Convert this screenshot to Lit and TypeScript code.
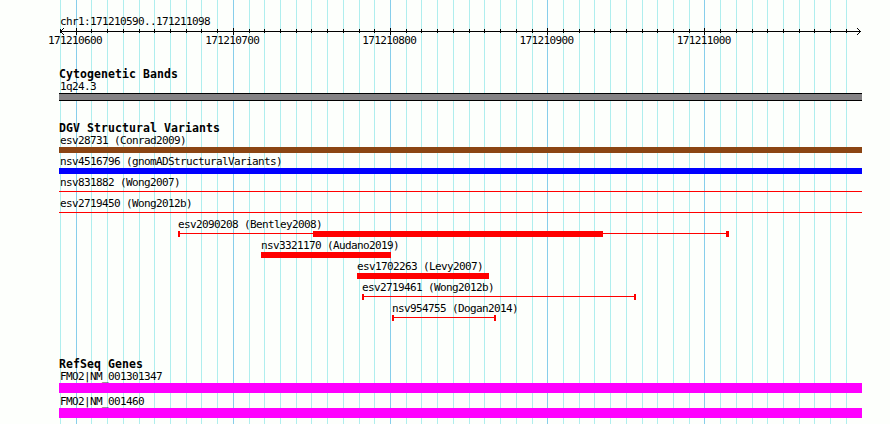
import { LitElement, html, css, svg } from "lit";
import { customElement, property } from "lit/decorators.js";
import { styleMap } from "lit/directives/style-map.js";

// Offsets inside the plot, which starts at the left page margin.
const ORIGIN = 1.5;
const STEP = 15.717;
const ticks = Array.from({ length: 51 }, (_, k) => ({
  x: Math.floor(ORIGIN + k * STEP),
  major: k % 10 === 1,
}));

interface Variant {
  name: string;
  color: string;
  x: number;
  width: number;
  kind: "box" | "line" | "span";
  box?: [number, number];
  endCap?: number;
}

const variants: Variant[] = [
  { name: "esv28731 (Conrad2009)", color: "#8b4513", x: 0, width: 803, kind: "box" },
  { name: "nsv4516796 (gnomADStructuralVariants)", color: "#0000ff", x: 0, width: 803, kind: "box" },
  { name: "nsv831882 (Wong2007)", color: "#ff0000", x: 0, width: 803, kind: "line" },
  { name: "esv2719450 (Wong2012b)", color: "#ff0000", x: 0, width: 803, kind: "line" },
  { name: "esv2090208 (Bentley2008)", color: "#ff0000", x: 119, width: 551, kind: "span", box: [135, 290], endCap: 3 },
  { name: "nsv3321170 (Audano2019)", color: "#ff0000", x: 202, width: 130, kind: "box" },
  { name: "esv1702263 (Levy2007)", color: "#ff0000", x: 298, width: 132, kind: "box" },
  { name: "esv2719461 (Wong2012b)", color: "#ff0000", x: 303, width: 274, kind: "span" },
  { name: "nsv954755 (Dogan2014)", color: "#ff0000", x: 333, width: 104, kind: "span" },
];

const textStyles = css`
  .label, .title { display: block; white-space: pre; color: #000; }
  .label {
    font: 11px/12px "DejaVu Sans Mono", "Liberation Mono", monospace;
    letter-spacing: -0.6225px;
    height: 12px;
    padding: 1px 0 0 1px;
  }
  .title {
    font: bold 11.5px/13px "DejaVu Sans Mono", "Liberation Mono", monospace;
    letter-spacing: 0.0767px;
    height: 12px;
  }
`;

@customElement("grid-lines")
export class GridLines extends LitElement {
  static styles = css`
    :host { display: block; }
    svg { display: block; width: 803px; height: 424px; }
    .minor { fill: #afeeee; }
    .major { fill: #87ceeb; }
  `;
  render() {
    return html`<svg viewBox="0 0 803 424" shape-rendering="crispEdges">
      ${ticks.map((t) => svg`<rect class=${t.major ? "major" : "minor"} x=${t.x} y="0" width="1" height="424"></rect>`)}
    </svg>`;
  }
}

@customElement("ruler-track")
export class RulerTrack extends LitElement {
  static styles = [textStyles, css`
    :host { display: block; height: 53px; padding-top: 15px; }
    .axis { display: block; width: 803px; height: 7px; overflow: visible; }
    .numbers {
      display: grid;
      grid-template-columns: repeat(5, 157.17px);
      margin: -1px 0 0 -11px;
    }
    .numbers .label { padding-left: 0; }
  `];
  render() {
    return html`
      <span class="label">chr1:171210590..171211098</span>
      <svg class="axis" viewBox="0 0 803 7" shape-rendering="crispEdges">
        <rect x="1" y="3" width="801" height="1"></rect>
        ${ticks.map((t) => svg`<rect x=${t.x} y=${t.major ? 0 : 1} width="1" height=${t.major ? 7 : 4}></rect>`)}
        <path d="M2 2h1v1h-1zM3 1h1v1h-1zM4 0h1v1h-1zM2 4h1v1h-1zM3 5h1v1h-1zM4 6h1v1h-1z"></path>
        <path d="M800 2h1v1h-1zM799 1h1v1h-1zM798 0h1v1h-1zM800 4h1v1h-1zM799 5h1v1h-1zM798 6h1v1h-1z"></path>
      </svg>
      <div class="numbers">
        ${[600, 700, 800, 900, 1000].map((n) => html`<span class="label">${171210000 + n}</span>`)}
      </div>`;
  }
}

@customElement("variant-row")
export class VariantRow extends LitElement {
  static styles = [textStyles, css`
    :host { display: block; height: 21px; }
    .glyph { display: block; height: 6px; }
  `];
  @property({ attribute: false }) variant!: Variant;
  render() {
    const { name, color, x, width, kind, box, endCap = 2 } = this.variant;
    return html`<div style=${styleMap({ marginLeft: `${x}px`, width: `${width}px` })}>
      <span class="label" style=${styleMap({ paddingLeft: x > 0 ? "0px" : "1px" })}>${name}</span>
      <svg class="glyph" width=${width} height="6" fill=${color} shape-rendering="crispEdges">
        ${kind === "box"
          ? svg`<rect width=${width} height="6"></rect>`
          : svg`<rect y="2" width=${width} height="1"></rect>`}
        ${kind === "span"
          ? svg`<rect width="2" height="6"></rect><rect x=${width - endCap} width=${endCap} height="6"></rect>`
          : ""}
        ${box ? svg`<rect x=${box[0]} width=${box[1]} height="6"></rect>` : ""}
      </svg>
    </div>`;
  }
}

@customElement("app-root")
export class AppRoot extends LitElement {
  static styles = [textStyles, css`
    :host { display: block; background: #fdfffc; height: 424px; overflow: hidden; }
    .plot { position: relative; width: 803px; height: 424px; margin-left: 59px; }
    .grid { position: absolute; inset: 0; }
    .tracks { position: relative; display: flex; flex-direction: column; }
    .bands { height: 54px; }
    .band { height: 6px; border: solid #000; border-width: 1px 0; background: #848284; }
    .variants { height: 236px; }
    .gene { height: 25px; }
    .gene-bar { height: 10px; background: #ff00ff; }
  `];
  render() {
    return html`<div class="plot">
      <grid-lines class="grid"></grid-lines>
      <div class="tracks">
        <ruler-track></ruler-track>
        <section class="bands">
          <span class="title">Cytogenetic Bands</span>
          <span class="label">1q24.3</span>
          <div class="band"></div>
        </section>
        <section class="variants">
          <span class="title">DGV Structural Variants</span>
          ${variants.map((v) => html`<variant-row .variant=${v}></variant-row>`)}
        </section>
        <section>
          <span class="title">RefSeq Genes</span>
          ${["FMO2|NM_001301347", "FMO2|NM_001460"].map((g) => html`<div class="gene"><span class="label">${g}</span><div class="gene-bar"></div></div>`)}
        </section>
      </div>
    </div>`;
  }
}
